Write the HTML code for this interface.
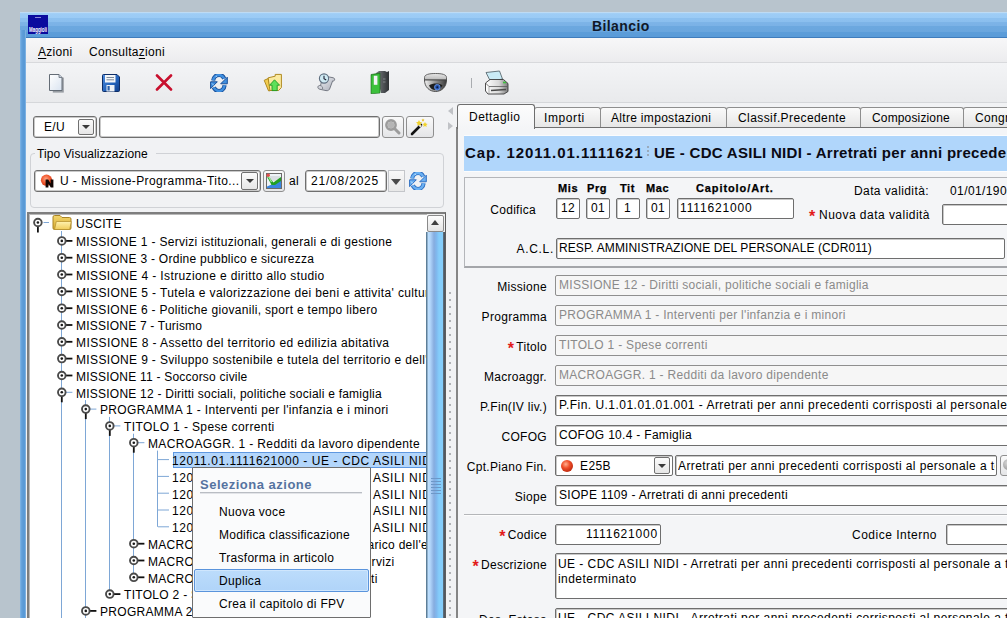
<!DOCTYPE html>
<html><head><meta charset="utf-8">
<style>
*{box-sizing:border-box;margin:0;padding:0}
html,body{width:1007px;height:618px;overflow:hidden;background:#b8c4cd;font-family:"Liberation Sans",sans-serif;font-size:12px;color:#000;letter-spacing:0.3px}
.a{position:absolute;white-space:nowrap}
#win{position:absolute;left:20px;top:12px;width:1000px;height:620px;background:#5b9ad6}
#title{position:absolute;left:20px;top:12px;width:1000px;height:26px;
 background:linear-gradient(#c4def3 0,#b8d8f4 1px,#9ecdf6 1.6px,#9bcbf5 5.5px,#8cc0ef 6.5px,#8bbfee 9.5px,#7db4e7 10.5px,#7bb2e6 13.5px,#6ca8df 14.5px,#6aa6de 19.5px,#5c9dd9 20.5px,#5a9bd8 24.5px,#3f7cbc 25.2px,#3f7cbc 26px)}
#client{position:absolute;left:26px;top:38px;width:990px;height:590px;background:#f1f2f4}
#menubar{position:absolute;left:26px;top:38px;width:990px;height:25px;background:linear-gradient(#f7f7f8,#ececee);border-bottom:1px solid #d8d9dc}
#toolbar{position:absolute;left:26px;top:63px;width:990px;height:40px;background:linear-gradient(#f3f4f6,#e9eaec);border-bottom:1px solid #d5d7da}
.inp{position:absolute;background:#fff;border:1px solid #6e6e6e;border-radius:2px;box-shadow:inset 1px 1px 0 #c8c8c8}
.dis{background:#f6f6f6;color:#888;border-color:#8f8f8f;box-shadow:none}
.lbl{position:absolute;white-space:nowrap;text-align:right}
.req{color:#e21b1b}
.tab{position:absolute;top:107px;height:20px;border:1px solid #8e8e8e;border-bottom:none;border-radius:3px 3px 0 0;background:linear-gradient(#fafafa,#e6e6e6);text-align:center;line-height:17px}
.cmb{background:#fff;border:1px solid #6f6f6f;border-radius:3px;box-shadow:inset 0 0 0 1px #c9c9c9}
.ddb{border:1px solid #707070;border-radius:2px;background:linear-gradient(#fbfbfb,#e6e6e6)}
.ddb i{position:absolute;left:50%;top:50%;margin-left:-4px;margin-top:-2px;border-left:4px solid transparent;border-right:4px solid transparent;border-top:4px solid #3a3a3a}
.btn{border:1px solid #8f8f8f;border-radius:3px;background:linear-gradient(#fafafa,#e4e5e7)}
.row{position:absolute;white-space:nowrap;height:17px;line-height:17px}
</style></head><body>
<div id="win"></div>
<div id="title"></div>
<div class="a" style="left:28px;top:15px;width:20px;height:19px;background:#0b0b9e"></div>
<div class="a" style="left:35px;top:17px;width:6px;height:1px;background:#8a8ad8"></div>
<svg class="a" style="left:28px;top:15px" width="20" height="19"><text x="1" y="17" font-family="Liberation Sans" font-weight="bold" font-size="7" fill="#fff" textLength="18" lengthAdjust="spacingAndGlyphs" style="letter-spacing:0">Maggioli</text></svg>
<div class="a" style="left:592px;top:18px;font-weight:bold;font-size:14px;letter-spacing:0.4px;color:#101828">Bilancio</div>
<div class="a" style="left:20px;top:30px;width:6px;height:600px;background:linear-gradient(90deg,#86b9e8 0,#6aa6de 1px,#5a9ad6 3px,#5a9ad6 5px,#9cc6ee 6px)"></div>
<div id="client"></div>
<div id="menubar"></div>
<div class="a" style="left:38px;top:45px"><u style="text-underline-offset:2px">A</u>zioni</div>
<div class="a" style="left:89px;top:45px">Consulta<u style="text-underline-offset:2px">z</u>ioni</div>
<div id="toolbar"></div>

<!-- toolbar icons -->
<svg class="a" style="left:48px;top:73px" width="19" height="20" viewBox="0 0 19 20">
 <defs><linearGradient id="gdoc" x1="0" y1="0" x2="1" y2="1"><stop offset="0" stop-color="#ffffff"/><stop offset="1" stop-color="#d9e3f0"/></linearGradient>
 <linearGradient id="gsave" x1="0" y1="0" x2="1" y2="1"><stop offset="0" stop-color="#4f8ee0"/><stop offset=".6" stop-color="#2160b8"/><stop offset="1" stop-color="#123f8a"/></linearGradient></defs>
 <path d="M3 3h11v15H3z" fill="#7b8088" transform="translate(1.8 1.6)" opacity=".75"/>
 <path d="M1.5 1.5h9.5l3 3v13h-12.5z" fill="url(#gdoc)" stroke="#646c76" stroke-width="1"/>
 <path d="M11 1.5v3h3" fill="#c8d2e0" stroke="#646c76" stroke-width=".8"/>
</svg>
<svg class="a" style="left:101px;top:73px" width="20" height="20" viewBox="0 0 20 20">
 <path d="M1.5 2.5q0-1 1-1h13.5l2.5 2.5v13.5q0 1-1 1H2.5q-1 0-1-1z" fill="url(#gsave)" stroke="#0d2d66" stroke-width="1"/>
 <rect x="4" y="2" width="10.5" height="7.5" fill="#f4f6f8"/>
 <path d="M5.5 4.5h7.5M5.5 6.8h7.5" stroke="#7d8a9a" stroke-width="1"/>
 <rect x="5.5" y="12" width="8" height="6.5" fill="#eef2f6"/>
 <rect x="6.5" y="13" width="2.2" height="4.5" fill="#2a5fa8"/>
</svg>
<svg class="a" style="left:155px;top:74px" width="18" height="17" viewBox="0 0 18 17">
 <path d="M2 1.5L16 15.5M16 1.5L2 15.5" stroke="#c8102e" stroke-width="2.6" stroke-linecap="round"/>
</svg>
<svg class="a" style="left:209px;top:74px" width="20" height="18" viewBox="0 0 20 18">
 <path d="M4.2 6.5C4.6 2.8 7.5 1 10.2 1C12.5 1 14.2 2.2 15.2 4.6" fill="none" stroke="#1b4f98" stroke-width="4.2"/>
 <path d="M18.3 3.2V9.8H11.7z" fill="#3f8fe0" stroke="#1b4f98" stroke-width="1" stroke-linejoin="miter"/>
 <path d="M4.2 6.5C4.6 2.8 7.5 1 10.2 1C12.5 1 14.2 2.2 15.2 4.6" fill="none" stroke="#3f8fe0" stroke-width="2.4"/>
 <path d="M15.6 11.2C15.2 15 12.5 17 9.8 17C7.5 17 5.8 15.8 4.8 13.4" fill="none" stroke="#1b4f98" stroke-width="4.2"/>
 <path d="M1.6 7.8H8.3L1.6 14.6z" fill="#3f8fe0" stroke="#1b4f98" stroke-width="1" stroke-linejoin="miter"/>
 <path d="M15.6 11.2C15.2 15 12.5 17 9.8 17C7.5 17 5.8 15.8 4.8 13.4" fill="none" stroke="#3f8fe0" stroke-width="2.4"/>
 <path d="M3 9.5L5 11.5M6.5 2.8L8 2" stroke="#a8d8ff" stroke-width="1"/>
</svg>
<svg class="a" style="left:263px;top:73px" width="21" height="20" viewBox="0 0 21 20">
 <path d="M5.2 4.8L12.2 3.2V1.4H18.4V14.5L15.6 17.5H5.5z" fill="#fbeaa0" stroke="#b08a22" stroke-width="1"/>
 <path d="M1.2 7.3L5.2 5.5L7 17.8H5.5z" fill="#f2cd50" stroke="#b08a22" stroke-width="1" stroke-linejoin="round"/>
 <path d="M11.5 6.8L16.6 12.2H14.2V17.6H9V12.2H6.6z" fill="#5ee05a" stroke="#1f9a1f" stroke-width=".9" stroke-linejoin="round"/>
</svg>
<svg class="a" style="left:317px;top:72px" width="20" height="20" viewBox="0 0 20 20">
 <defs><linearGradient id="gscr" x1="0" y1="0" x2="1" y2="1"><stop offset="0" stop-color="#f4f5f8"/><stop offset="1" stop-color="#a9adb8"/></linearGradient></defs>
 <path d="M6 4L15 5.5c2 .3 3 1 2.6 2.4-.3 1-1.2 1.3-2 1L13 16c-.5 2-2 3-4 2.6L3 17.3c-1.8-.4-2.4-1.5-2-2.7.4-1 1.5-1.3 2.5-1L6 4z" fill="url(#gscr)" stroke="#6a6e78" stroke-width=".9"/>
 <path d="M3.5 13.6c1.5.4 2.5 1.5 2 3.5" fill="none" stroke="#6a6e78" stroke-width=".8"/>
 <circle cx="7" cy="6.5" r="4.6" fill="#cfeaf3" stroke="#5f6f80" stroke-width="1.1"/>
 <path d="M7 3.8V6.7L9.2 8" stroke="#223" stroke-width="1.1" fill="none"/>
</svg>
<svg class="a" style="left:370px;top:70px" width="21" height="24" viewBox="0 0 21 24">
 <defs><linearGradient id="gbnd" x1="0" y1="0" x2="1" y2="0"><stop offset="0" stop-color="#7a7e82"/><stop offset="1" stop-color="#2e3134"/></linearGradient></defs>
 <path d="M6 3l3-2h6l2 1 2-1v19l-4 3h-4z" fill="url(#gbnd)"/>
 <path d="M1 4.5l9 -1.5v20l-9 .8z" fill="#2ea22e" stroke="#1a6a1a" stroke-width=".6"/>
 <path d="M1.6 5.5l7.8-1.2v18.4l-7.8.6z" fill="#3cc03c"/>
 <rect x="3.8" y="5.8" width="3.6" height="9" fill="#f4f2f8"/>
 <path d="M13 9h2.5M13 12h2.5" stroke="#909498" stroke-width=".8"/>
</svg>
<svg class="a" style="left:423px;top:72px" width="25" height="21" viewBox="0 0 25 21">
 <defs><linearGradient id="gdm" x1="0" y1="0" x2="1" y2="0"><stop offset="0" stop-color="#f4f4f4"/><stop offset=".45" stop-color="#9a9a9a"/><stop offset="1" stop-color="#3a3a3a"/></linearGradient>
 <linearGradient id="gdt" x1="0" y1="0" x2="0" y2="1"><stop offset="0" stop-color="#e8e8e8"/><stop offset="1" stop-color="#b8b8b8"/></linearGradient></defs>
 <path d="M1.5 5.5C1.5 2.5 6 1.5 12.5 1.5S23.5 2.5 23.5 5.5V8H1.5z" fill="url(#gdt)" stroke="#555" stroke-width=".9"/>
 <path d="M1.5 8H23.5C23.5 15 18.5 19.5 12.5 19.5S1.5 15 1.5 8z" fill="url(#gdm)" stroke="#444" stroke-width=".9"/>
 <path d="M6 13.5C8 12 10.5 11.5 13 11.5S18 12 19.5 13.5C18 16.5 15.5 18 12.5 18S7.5 16.5 6 13.5z" fill="#1e1e1e"/>
 <circle cx="14.3" cy="15.2" r="2.8" fill="#2a56b0" stroke="#6fa0f0" stroke-width=".8"/>
 <circle cx="14.3" cy="15.2" r="1" fill="#0a1a40"/>
</svg>
<div class="a" style="left:471px;top:78px;width:1px;height:10px;background:#a9acb0"></div>
<svg class="a" style="left:484px;top:70px" width="26" height="25" viewBox="0 0 26 25">
 <defs><linearGradient id="gpr" x1="0" y1="0" x2="1" y2="0"><stop offset="0" stop-color="#ffffff"/><stop offset=".6" stop-color="#d8d8d8"/><stop offset="1" stop-color="#7a7a7a"/></linearGradient></defs>
 <path d="M2 2.5L15.5 1L18.5 9L6.5 11.5z" fill="#c9eaf5" stroke="#5a6a70" stroke-width=".9"/>
 <path d="M1.5 13L6 9.5H19.5L24 13.5V21.5L20 24H4L1.5 21z" fill="url(#gpr)" stroke="#3a3a3a" stroke-width=".9"/>
 <path d="M1.5 13L5 16.5H24" fill="none" stroke="#5a5a5a" stroke-width=".8"/>
 <path d="M5 16.5V24" stroke="#888" stroke-width=".6"/>
 <path d="M7 20.5L22 19.5" stroke="#4a4a4a" stroke-width="1.6"/>
 <path d="M19 12.5h3" stroke="#3cc23c" stroke-width="1.6"/>
</svg>

<!-- left panel top controls -->
<div class="a cmb" style="left:33px;top:116px;width:64px;height:22px"></div>
<div class="a" style="left:44px;top:120px">E/U</div>
<div class="a ddb" style="left:78px;top:119px;width:16px;height:16px"><i></i></div>
<div class="a cmb" style="left:99px;top:116px;width:281px;height:22px"></div>
<div class="a btn" style="left:382px;top:116px;width:22px;height:22px"></div>
<svg class="a" style="left:384px;top:118px" width="18" height="18" viewBox="0 0 18 18">
 <circle cx="7" cy="7" r="4.6" fill="none" stroke="#9c9c9c" stroke-width="2.6"/>
 <circle cx="7" cy="7" r="3.2" fill="#b5b5b5"/>
 <path d="M10.5 10.5l4.5 4.5" stroke="#9c9c9c" stroke-width="3" stroke-linecap="round"/>
</svg>
<div class="a btn" style="left:406px;top:116px;width:28px;height:22px"></div>
<svg class="a" style="left:410px;top:118px" width="20" height="18" viewBox="0 0 20 18">
 <path d="M2 16L11 7" stroke="#111" stroke-width="2.6" stroke-linecap="round"/>
 <path d="M9.5 8.5L11 7" stroke="#fff" stroke-width="2"/>
 <path d="M9 2l1 2 2 .3-1.5 1.4.4 2L9 6.7 7.2 7.7l.4-2L6 4.3 8 4z" fill="#f1d22a"/>
 <path d="M15 4l.8 1.6 1.8.3-1.3 1.2.3 1.8-1.6-.9-1.6.9.3-1.8-1.3-1.2 1.8-.3z" fill="#f1d22a"/>
 <path d="M13 0.5l.5 1 1 .2-.8.7.2 1-.9-.5-.9.5.2-1-.8-.7 1-.2z" fill="#e8c020"/>
</svg>

<!-- group box -->
<div class="a" style="left:30px;top:153px;width:414px;height:55px;border:1px solid #d0d2d6;border-radius:4px"></div>
<div class="a" style="left:35px;top:147px;padding:0 8px 0 2px;background:#f1f2f4;height:14px;line-height:14px;letter-spacing:0.1px">Tipo Visualizzazione</div>
<div class="a cmb" style="left:34px;top:170px;width:227px;height:22px"></div>
<svg class="a" style="left:40px;top:172px" width="16" height="17" viewBox="0 0 16 17">
 <defs><radialGradient id="rn" cx=".45" cy=".4" r=".6"><stop offset="0" stop-color="#ffa888"/><stop offset=".6" stop-color="#f25a30"/><stop offset="1" stop-color="#d83a18"/></radialGradient></defs>
 <circle cx="6.5" cy="8.2" r="5.6" fill="url(#rn)"/>
 <path d="M5.6 15.6V7.6h2.6l2.4 3.8V7.6h2.8v8h-2.6L8.4 11.8v3.8z" fill="#120604"/>
</svg>
<div class="a" style="left:60px;top:174px;letter-spacing:0.42px">U - Missione-Programma-Tito...</div>
<div class="a ddb" style="left:241px;top:172px;width:17px;height:18px"><i></i></div>
<div class="a btn" style="left:263px;top:170px;width:22px;height:22px"></div>
<svg class="a" style="left:265px;top:172px" width="18" height="18" viewBox="0 0 18 18">
 <rect x="1.5" y="1.5" width="15" height="15" fill="#eef3f6" stroke="#6a6a6a" stroke-width="1"/>
 <rect x="5" y="4" width="10" height="5" fill="#d9dee2"/>
 <path d="M2 14.5L9 11.5L16 6.5V16H2z" fill="#3a86e0"/>
 <path d="M2.5 3.5C4.5 5 6.5 8.5 8.5 10.5C10.5 9 13 7 16 5V9L10 13H6.5C5 10 3.5 7 2.5 6z" fill="#23a023"/>
 <path d="M3 4C4.5 6 5.5 8 6.5 10" stroke="#a8f0a0" stroke-width="1.2" fill="none"/>
 <circle cx="3.2" cy="3.2" r="1.8" fill="#e05050"/>
</svg>
<div class="a" style="left:289px;top:174px">al</div>
<div class="a cmb" style="left:305px;top:170px;width:82px;height:22px"></div>
<div class="a" style="left:311px;top:174px;letter-spacing:0.8px">21/08/2025</div>
<div class="a" style="left:388px;top:170px;width:17px;height:22px;border:1px solid #c4c6ca;background:linear-gradient(#f8f8f8,#e8e8e8)"></div>
<div class="a" style="left:391px;top:179px;width:0;height:0;border-left:5.5px solid transparent;border-right:5.5px solid transparent;border-top:6px solid #4a4a4a"></div>
<svg class="a" style="left:408px;top:172px" width="20" height="18" viewBox="0 0 20 18">
 <path d="M4.2 6.5C4.6 2.8 7.5 1 10.2 1C12.5 1 14.2 2.2 15.2 4.6" fill="none" stroke="#2f6fc2" stroke-width="4.2"/>
 <path d="M18.3 3.2V9.8H11.7z" fill="#6ab0f2" stroke="#2f6fc2" stroke-width="1" stroke-linejoin="miter"/>
 <path d="M4.2 6.5C4.6 2.8 7.5 1 10.2 1C12.5 1 14.2 2.2 15.2 4.6" fill="none" stroke="#6ab0f2" stroke-width="2.4"/>
 <path d="M15.6 11.2C15.2 15 12.5 17 9.8 17C7.5 17 5.8 15.8 4.8 13.4" fill="none" stroke="#2f6fc2" stroke-width="4.2"/>
 <path d="M1.6 7.8H8.3L1.6 14.6z" fill="#6ab0f2" stroke="#2f6fc2" stroke-width="1" stroke-linejoin="miter"/>
 <path d="M15.6 11.2C15.2 15 12.5 17 9.8 17C7.5 17 5.8 15.8 4.8 13.4" fill="none" stroke="#6ab0f2" stroke-width="2.4"/>
 <path d="M3 9.5L5 11.5M6.5 2.8L8 2" stroke="#c8e8ff" stroke-width="1"/>
</svg>

<!-- tree frame -->
<div class="a" style="left:27px;top:212px;width:419px;height:420px;background:#fff;border:2px solid #7e7e7e;border-right:1px solid #5e5e5e;box-shadow:inset 1px 1px 0 #b8b8b8"></div>
<!-- scrollbar -->
<div class="a" style="left:427px;top:214px;width:18px;height:410px;background:#f0f0f0"></div>
<div class="a" style="left:427px;top:215px;width:17px;height:17px;border:1px solid #8a8a8a;border-radius:2px;background:linear-gradient(#fdfdfd,#e4e4e4)"></div>
<div class="a" style="left:431px;top:220px;width:0;height:0;border-left:4.5px solid transparent;border-right:4.5px solid transparent;border-bottom:5px solid #404040"></div>
<div class="a" style="left:426px;top:232px;width:19px;height:400px;background:linear-gradient(90deg,#5d7e98 0,#5d7e98 1.2px,#bfe0fd 1.8px,#b4d8fc 4px,#86acdf 8px,#7fb8ee 10.5px,#84cdfb 13px,#84cdfb 16.5px,#5a6a78 17.5px,#4a5058 19px)"></div>
<div class="a" style="left:431px;top:478px;width:10px;height:1px;background:#6d98c8;box-shadow:0 3px 0 #6d98c8,0 6px 0 #6d98c8,0 9px 0 #6d98c8,0 12px 0 #6d98c8,0 15px 0 #6d98c8"></div>
<!-- splitter -->
<div class="a" style="left:448px;top:106.5px;width:0;height:0;border-top:4.5px solid transparent;border-bottom:4.5px solid transparent;border-right:5px solid #c0c2c6"></div>
<div class="a" style="left:448px;top:121.5px;width:0;height:0;border-top:4.5px solid transparent;border-bottom:4.5px solid transparent;border-left:5px solid #c0c2c6"></div>
<div class="a" style="left:449px;top:287px;width:2px;height:340px;background:repeating-linear-gradient(transparent 0 5px,#b0b2b6 5px 7px)"></div>

<div style="position:absolute;left:0;top:0;width:1007px;height:618px;clip-path:inset(214px 581px 0 29px)">
<svg class="a" style="left:0;top:0" width="427" height="618" viewBox="0 0 427 618">
<path d="M61.5 231.0V640.0" stroke="#7ea7d6" stroke-width="1"/>
<path d="M85.5 400.1V640.0" stroke="#7ea7d6" stroke-width="1"/>
<path d="M109.5 416.9V594.1" stroke="#7ea7d6" stroke-width="1"/>
<path d="M133.5 433.7V577.3" stroke="#7ea7d6" stroke-width="1"/>
<path d="M157.5 450.6V526.8" stroke="#7ea7d6" stroke-width="1"/>
<path d="M43.5 222.5H49" stroke="#7ea7d6" stroke-width="1"/>
<path d="M158 459.6H169" stroke="#7ea7d6" stroke-width="1"/>
<path d="M158 476.4H169" stroke="#7ea7d6" stroke-width="1"/>
<path d="M158 493.2H169" stroke="#7ea7d6" stroke-width="1"/>
<path d="M158 510.0H169" stroke="#7ea7d6" stroke-width="1"/>
<path d="M158 526.8H169" stroke="#7ea7d6" stroke-width="1"/>
<path d="M37.9 226.0V232.5" stroke="#111" stroke-width="1.8"/>
<circle cx="37.9" cy="222.5" r="3.8" fill="#fff" stroke="#4a4a4a" stroke-width="1.9"/>
<circle cx="37.9" cy="222.5" r="1.3" fill="#1a1a1a"/>
<path d="M65.3 240.9H72.39999999999999" stroke="#111" stroke-width="1.8"/>
<circle cx="61.8" cy="240.9" r="3.8" fill="#fff" stroke="#4a4a4a" stroke-width="1.9"/>
<circle cx="61.8" cy="240.9" r="1.3" fill="#1a1a1a"/>
<path d="M65.3 257.7H72.39999999999999" stroke="#111" stroke-width="1.8"/>
<circle cx="61.8" cy="257.7" r="3.8" fill="#fff" stroke="#4a4a4a" stroke-width="1.9"/>
<circle cx="61.8" cy="257.7" r="1.3" fill="#1a1a1a"/>
<path d="M65.3 274.5H72.39999999999999" stroke="#111" stroke-width="1.8"/>
<circle cx="61.8" cy="274.5" r="3.8" fill="#fff" stroke="#4a4a4a" stroke-width="1.9"/>
<circle cx="61.8" cy="274.5" r="1.3" fill="#1a1a1a"/>
<path d="M65.3 291.4H72.39999999999999" stroke="#111" stroke-width="1.8"/>
<circle cx="61.8" cy="291.4" r="3.8" fill="#fff" stroke="#4a4a4a" stroke-width="1.9"/>
<circle cx="61.8" cy="291.4" r="1.3" fill="#1a1a1a"/>
<path d="M65.3 308.2H72.39999999999999" stroke="#111" stroke-width="1.8"/>
<circle cx="61.8" cy="308.2" r="3.8" fill="#fff" stroke="#4a4a4a" stroke-width="1.9"/>
<circle cx="61.8" cy="308.2" r="1.3" fill="#1a1a1a"/>
<path d="M65.3 325.0H72.39999999999999" stroke="#111" stroke-width="1.8"/>
<circle cx="61.8" cy="325.0" r="3.8" fill="#fff" stroke="#4a4a4a" stroke-width="1.9"/>
<circle cx="61.8" cy="325.0" r="1.3" fill="#1a1a1a"/>
<path d="M65.3 341.8H72.39999999999999" stroke="#111" stroke-width="1.8"/>
<circle cx="61.8" cy="341.8" r="3.8" fill="#fff" stroke="#4a4a4a" stroke-width="1.9"/>
<circle cx="61.8" cy="341.8" r="1.3" fill="#1a1a1a"/>
<path d="M65.3 358.6H72.39999999999999" stroke="#111" stroke-width="1.8"/>
<circle cx="61.8" cy="358.6" r="3.8" fill="#fff" stroke="#4a4a4a" stroke-width="1.9"/>
<circle cx="61.8" cy="358.6" r="1.3" fill="#1a1a1a"/>
<path d="M65.3 375.5H72.39999999999999" stroke="#111" stroke-width="1.8"/>
<circle cx="61.8" cy="375.5" r="3.8" fill="#fff" stroke="#4a4a4a" stroke-width="1.9"/>
<circle cx="61.8" cy="375.5" r="1.3" fill="#1a1a1a"/>
<path d="M61.8 395.8V402.3" stroke="#111" stroke-width="1.8"/>
<path d="M65.8 392.3H72.39999999999999" stroke="#7ea7d6" stroke-width="1"/>
<circle cx="61.8" cy="392.3" r="3.8" fill="#fff" stroke="#4a4a4a" stroke-width="1.9"/>
<circle cx="61.8" cy="392.3" r="1.3" fill="#1a1a1a"/>
<path d="M85.8 412.6V419.1" stroke="#111" stroke-width="1.8"/>
<path d="M89.8 409.1H96.39999999999999" stroke="#7ea7d6" stroke-width="1"/>
<circle cx="85.8" cy="409.1" r="3.8" fill="#fff" stroke="#4a4a4a" stroke-width="1.9"/>
<circle cx="85.8" cy="409.1" r="1.3" fill="#1a1a1a"/>
<path d="M109.8 429.4V435.9" stroke="#111" stroke-width="1.8"/>
<path d="M113.8 425.9H120.39999999999999" stroke="#7ea7d6" stroke-width="1"/>
<circle cx="109.8" cy="425.9" r="3.8" fill="#fff" stroke="#4a4a4a" stroke-width="1.9"/>
<circle cx="109.8" cy="425.9" r="1.3" fill="#1a1a1a"/>
<path d="M133.8 446.2V452.7" stroke="#111" stroke-width="1.8"/>
<path d="M137.8 442.7H144.4" stroke="#7ea7d6" stroke-width="1"/>
<circle cx="133.8" cy="442.7" r="3.8" fill="#fff" stroke="#4a4a4a" stroke-width="1.9"/>
<circle cx="133.8" cy="442.7" r="1.3" fill="#1a1a1a"/>
<path d="M137.3 543.7H144.4" stroke="#111" stroke-width="1.8"/>
<circle cx="133.8" cy="543.7" r="3.8" fill="#fff" stroke="#4a4a4a" stroke-width="1.9"/>
<circle cx="133.8" cy="543.7" r="1.3" fill="#1a1a1a"/>
<path d="M137.3 560.5H144.4" stroke="#111" stroke-width="1.8"/>
<circle cx="133.8" cy="560.5" r="3.8" fill="#fff" stroke="#4a4a4a" stroke-width="1.9"/>
<circle cx="133.8" cy="560.5" r="1.3" fill="#1a1a1a"/>
<path d="M137.3 577.3H144.4" stroke="#111" stroke-width="1.8"/>
<circle cx="133.8" cy="577.3" r="3.8" fill="#fff" stroke="#4a4a4a" stroke-width="1.9"/>
<circle cx="133.8" cy="577.3" r="1.3" fill="#1a1a1a"/>
<path d="M113.3 594.1H120.39999999999999" stroke="#111" stroke-width="1.8"/>
<circle cx="109.8" cy="594.1" r="3.8" fill="#fff" stroke="#4a4a4a" stroke-width="1.9"/>
<circle cx="109.8" cy="594.1" r="1.3" fill="#1a1a1a"/>
<path d="M89.3 610.9H96.39999999999999" stroke="#111" stroke-width="1.8"/>
<circle cx="85.8" cy="610.9" r="3.8" fill="#fff" stroke="#4a4a4a" stroke-width="1.9"/>
<circle cx="85.8" cy="610.9" r="1.3" fill="#1a1a1a"/>
<defs><linearGradient id="fgb" x1="0" y1="0" x2="0" y2="1"><stop offset="0" stop-color="#f3d66e"/><stop offset="1" stop-color="#d6a92c"/></linearGradient><linearGradient id="fgf" x1="0" y1="0" x2="0" y2="1"><stop offset="0" stop-color="#fff2b0"/><stop offset="1" stop-color="#f0cc5a"/></linearGradient></defs>
<path d="M53 217q0-1.5 1.5-1.5h5.5l2 2h7.5q1.5 0 1.5 1.5v9q0 1.5-1.5 1.5H54.5q-1.5 0-1.5-1.5z" fill="url(#fgb)" stroke="#a98424" stroke-width="1"/>
<path d="M54.5 229.5l1.8-8h15l-1.6 8z" fill="url(#fgf)" stroke="#b89332" stroke-width=".8"/>
</svg>
<div class="a" style="left:173px;top:451.5px;width:260px;height:16px;background:#b3d6fb;border:1px solid #5f98e0"></div>

<div class="row" style="left:76px;top:215.84px;letter-spacing:0.300px">USCITE</div>
<div class="row" style="left:76px;top:234.24px;letter-spacing:0.310px">MISSIONE 1 - Servizi istituzionali, generali e di gestione</div>
<div class="row" style="left:76px;top:251.06px;letter-spacing:0.268px">MISSIONE 3 - Ordine pubblico e sicurezza</div>
<div class="row" style="left:76px;top:267.88px;letter-spacing:0.383px">MISSIONE 4 - Istruzione e diritto allo studio</div>
<div class="row" style="left:76px;top:284.70px;letter-spacing:0.370px">MISSIONE 5 - Tutela e valorizzazione dei beni e attivita&#39; culturali</div>
<div class="row" style="left:76px;top:301.52px;letter-spacing:0.322px">MISSIONE 6 - Politiche giovanili, sport e tempo libero</div>
<div class="row" style="left:76px;top:318.34px;letter-spacing:0.209px">MISSIONE 7 - Turismo</div>
<div class="row" style="left:76px;top:335.16px;letter-spacing:0.408px">MISSIONE 8 - Assetto del territorio ed edilizia abitativa</div>
<div class="row" style="left:76px;top:351.98px;letter-spacing:0.350px">MISSIONE 9 - Sviluppo sostenibile e tutela del territorio e dell&#39;ambiente</div>
<div class="row" style="left:76px;top:368.80px;letter-spacing:0.219px">MISSIONE 11 - Soccorso civile</div>
<div class="row" style="left:76px;top:385.62px;letter-spacing:0.233px">MISSIONE 12 - Diritti sociali, politiche sociali e famiglia</div>
<div class="row" style="left:100px;top:402.44px;letter-spacing:0.338px">PROGRAMMA 1 - Interventi per l&#39;infanzia e i minori</div>
<div class="row" style="left:124px;top:419.26px;letter-spacing:0.380px">TITOLO 1 - Spese correnti</div>
<div class="row" style="left:148px;top:436.08px;letter-spacing:0.355px">MACROAGGR. 1 - Redditi da lavoro dipendente</div>
<div class="row" style="left:172px;top:452.90px;letter-spacing:0.570px">12011.01.1111621000 - UE - CDC ASILI NIDI - Arretrati</div>
<div class="row" style="left:172px;top:469.72px;letter-spacing:0.570px">12011.01.1111621001 - UE - CDC ASILI NIDI - Arretrati</div>
<div class="row" style="left:172px;top:486.54px;letter-spacing:0.570px">12011.01.1111621002 - UE - CDC ASILI NIDI - Arretrati</div>
<div class="row" style="left:172px;top:503.36px;letter-spacing:0.570px">12011.01.1111621003 - UE - CDC ASILI NIDI - Arretrati</div>
<div class="row" style="left:172px;top:520.18px;letter-spacing:0.570px">12011.01.1111621004 - UE - CDC ASILI NIDI - Arretrati</div>
<div class="row" style="left:148px;top:537.00px;letter-spacing:0.300px">MACROAGGR. 2 - Imposte e tasse a carico dell&#39;ente</div>
<div class="row" style="left:148px;top:553.82px;letter-spacing:0.300px">MACROAGGR. 3 - Acquisto di beni e servizi</div>
<div class="row" style="left:148px;top:570.64px;letter-spacing:0.300px">MACROAGGR. 4 - Trasferimenti correnti</div>
<div class="row" style="left:124px;top:587.46px;letter-spacing:0.300px">TITOLO 2 - Spese in conto capitale</div>
<div class="row" style="left:100px;top:604.28px;letter-spacing:0.300px">PROGRAMMA 2 - Interventi per la disabilita&#39;</div>
</div>
<!-- fragments right of menu -->
<div class="a" style="left:371px;top:534px;width:55px;height:52px;background:#fff;overflow:hidden">
 <div class="row" style="left:-3.5px;top:2.9px;letter-spacing:0.3px">arico dell'ente</div>
 <div class="row" style="left:0.6px;top:19.8px;letter-spacing:0.3px">rvizi</div>
 <div class="row" style="left:0.1px;top:36.6px;letter-spacing:0.3px">ti</div>
</div>
<!-- context menu -->
<div class="a" style="left:192px;top:467px;width:179px;height:151px;background:#fafbfc;border:1px solid #6e6e6e;border-radius:1px"></div>
<div class="a" style="left:200px;top:477px;font-size:13px;font-weight:bold;letter-spacing:0.5px;color:#5573a0">Seleziona azione</div>
<div class="a" style="left:200px;top:492px;width:162px;height:1px;background:#b9bdc3;box-shadow:0 1px 0 #e2e4e8"></div>
<div class="a" style="left:219px;top:505px;letter-spacing:0.3px">Nuova voce</div>
<div class="a" style="left:219px;top:528px;letter-spacing:0.23px">Modifica classificazione</div>
<div class="a" style="left:219px;top:551px;letter-spacing:0.3px">Trasforma in articolo</div>
<div class="a" style="left:194px;top:569px;width:175px;height:23px;border:1px solid #5a94dc;border-radius:2px;background:linear-gradient(#bcdcfb,#b0d4f9);box-shadow:inset 0 0 0 1px #cfe6fd"></div>
<div class="a" style="left:219px;top:574px;letter-spacing:0.3px">Duplica</div>
<div class="a" style="left:219px;top:597px;letter-spacing:0.3px">Crea il capitolo di FPV</div>

<!-- tab control -->
<div class="a" style="left:456px;top:127px;width:600px;height:600px;border-left:2px solid #858585;border-top:1px solid #707070;background:#f4f5f7"></div>
<div class="tab" style="left:534px;width:67px"></div>
<div class="tab" style="left:600px;width:127px"></div>
<div class="tab" style="left:726px;width:135px"></div>
<div class="tab" style="left:860px;width:104px"></div>
<div class="tab" style="left:963px;width:80px"></div>
<div class="a" style="left:544px;top:111px;letter-spacing:0.6px">Importi</div>
<div class="a" style="left:611px;top:111px;letter-spacing:0.31px">Altre impostazioni</div>
<div class="a" style="left:738px;top:111px;letter-spacing:0.41px">Classif.Precedente</div>
<div class="a" style="left:872px;top:111px;letter-spacing:0.15px">Composizione</div>
<div class="a" style="left:975px;top:111px;letter-spacing:0.3px">Congruita'</div>
<div class="a" style="left:457px;top:104px;width:78px;height:25px;border:1px solid #6e6e6e;border-bottom:none;border-radius:3px 3px 0 0;background:linear-gradient(#fcfcfc,#f4f5f7)"></div>
<div class="a" style="left:469px;top:110px;letter-spacing:0.46px">Dettaglio</div>

<!-- header -->
<div class="a" style="left:464px;top:136px;width:560px;height:35px;background:#b0d6fb;box-shadow:0 -1px 0 #fbfcfd,0 1px 0 #fbfcfd"></div>
<div class="a" style="left:465px;top:144px;font-size:15px;font-weight:bold;letter-spacing:0.95px;color:#0a0a14">Cap. 12011.01.1111621</div>
<div class="a" style="left:647px;top:146px;width:2px;height:12px;background:repeating-linear-gradient(#9ab 0 2px,transparent 2px 4px)"></div>
<div class="a" style="left:654px;top:144px;font-size:15px;font-weight:bold;letter-spacing:0.28px;color:#0a0a14">UE - CDC ASILI NIDI - Arretrati per anni precedenti</div>

<!-- codifica group -->
<div class="a" style="left:464px;top:177px;width:560px;height:91px;border:1px solid #b4b6ba;border-right:none;border-bottom:2px solid #a4a6aa"></div>
<div class="a" style="left:558px;top:182px;font-size:11px;font-weight:bold;-webkit-text-stroke:0.25px #000;letter-spacing:0.6px">Mis</div>
<div class="a" style="left:587px;top:182px;font-size:11px;font-weight:bold;-webkit-text-stroke:0.25px #000;letter-spacing:0.6px">Prg</div>
<div class="a" style="left:620px;top:182px;font-size:11px;font-weight:bold;-webkit-text-stroke:0.25px #000;letter-spacing:0.6px">Tit</div>
<div class="a" style="left:646px;top:182px;font-size:11px;font-weight:bold;-webkit-text-stroke:0.25px #000;letter-spacing:0.6px">Mac</div>
<div class="a" style="left:696px;top:182px;font-size:11px;font-weight:bold;-webkit-text-stroke:0.25px #000;letter-spacing:0.9px">Capitolo/Art.</div>
<div class="lbl" style="left:440px;top:203px;width:96px">Codifica</div>
<div class="inp" style="left:556px;top:198px;width:24px;height:21px"></div>
<div class="a" style="left:561px;top:201px">12</div>
<div class="inp" style="left:586px;top:198px;width:24px;height:21px"></div>
<div class="a" style="left:591px;top:201px">01</div>
<div class="inp" style="left:616px;top:198px;width:24px;height:21px"></div>
<div class="a" style="left:624px;top:201px">1</div>
<div class="inp" style="left:646px;top:198px;width:24px;height:21px"></div>
<div class="a" style="left:651px;top:201px">01</div>
<div class="inp" style="left:677px;top:198px;width:117px;height:21px"></div>
<div class="a" style="left:680px;top:201px;letter-spacing:0.85px">1111621000</div>
<div class="a" style="left:854px;top:184px;letter-spacing:0.4px">Data validità:</div>
<div class="a" style="left:950px;top:184px;letter-spacing:0.4px">01/01/1900</div>
<div class="a req" style="left:809px;top:208px;font-size:16px;font-weight:bold">*</div>
<div class="a" style="left:819px;top:208px;letter-spacing:0.47px">Nuova data validità</div>
<div class="inp" style="left:942px;top:204px;width:80px;height:21px"></div>
<div class="lbl" style="left:440px;top:242px;width:114px;letter-spacing:0.7px">A.C.L.</div>
<div class="inp" style="left:556px;top:238px;width:449px;height:21px"></div>
<div class="a" style="left:559px;top:241px;letter-spacing:0.1px">RESP. AMMINISTRAZIONE DEL PERSONALE (CDR011)</div>

<!-- fields -->
<div class="lbl" style="left:440px;top:280px;width:107px">Missione</div>
<div class="inp dis" style="left:555px;top:275px;width:470px;height:21px"></div>
<div class="a" style="left:559px;top:278px;color:#8a8a8a">MISSIONE 12 - Diritti sociali, politiche sociali e famiglia</div>
<div class="lbl" style="left:440px;top:310px;width:107px">Programma</div>
<div class="inp dis" style="left:555px;top:305px;width:470px;height:21px"></div>
<div class="a" style="left:559px;top:308px;color:#8a8a8a">PROGRAMMA 1 - Interventi per l'infanzia e i minori</div>
<div class="lbl" style="left:440px;top:340px;width:107px"><span class="req" style="font-size:16px;font-weight:bold;line-height:0;position:relative;top:3px;margin-right:2px">*</span>Titolo</div>
<div class="inp dis" style="left:555px;top:335px;width:470px;height:21px"></div>
<div class="a" style="left:559px;top:338px;color:#8a8a8a">TITOLO 1 - Spese correnti</div>
<div class="lbl" style="left:440px;top:370px;width:107px">Macroaggr.</div>
<div class="inp dis" style="left:555px;top:365px;width:470px;height:21px"></div>
<div class="a" style="left:559px;top:368px;color:#8a8a8a">MACROAGGR. 1 - Redditi da lavoro dipendente</div>
<div class="lbl" style="left:440px;top:400px;width:107px">P.Fin(IV liv.)</div>
<div class="inp" style="left:555px;top:395px;width:470px;height:21px"></div>
<div class="a" style="left:559px;top:398px;letter-spacing:0.47px">P.Fin. U.1.01.01.01.001 - Arretrati per anni precedenti corrisposti al personale a tempo</div>
<div class="lbl" style="left:440px;top:430px;width:107px">COFOG</div>
<div class="inp" style="left:555px;top:425px;width:470px;height:21px"></div>
<div class="a" style="left:559px;top:428px">COFOG 10.4 - Famiglia</div>
<div class="lbl" style="left:440px;top:460px;width:107px">Cpt.Piano Fin.</div>
<div class="inp" style="left:555px;top:455px;width:118px;height:21px"></div>
<svg class="a" style="left:560px;top:459px" width="14" height="14" viewBox="0 0 14 14">
 <defs><radialGradient id="rball" cx=".4" cy=".35" r=".65"><stop offset="0" stop-color="#ffb090"/><stop offset=".5" stop-color="#f0502a"/><stop offset="1" stop-color="#c02a10"/></radialGradient></defs><circle cx="7" cy="7" r="6" fill="url(#rball)"/>
</svg>
<div class="a" style="left:580px;top:459px;letter-spacing:0.4px">E25B</div>
<div class="a ddb" style="left:654px;top:457px;width:16px;height:17px"><i></i></div>
<div class="inp" style="left:675px;top:455px;width:322px;height:21px;overflow:hidden"></div>
<div class="a" style="left:678px;top:459px;width:317px;overflow:hidden;letter-spacing:0.42px">Arretrati per anni precedenti corrisposti al personale a tempo</div>
<div class="a btn" style="left:1000px;top:455px;width:20px;height:21px;border-radius:3px"></div>
<div class="a" style="left:1003px;top:459px;width:11px;height:11px;border-radius:50%;background:radial-gradient(circle at 40% 35%,#d8d8d8,#8a8a8a)"></div>
<div class="lbl" style="left:440px;top:490px;width:107px">Siope</div>
<div class="inp" style="left:555px;top:485px;width:470px;height:21px"></div>
<div class="a" style="left:559px;top:488px">SIOPE 1109 - Arretrati di anni precedenti</div>

<div class="a" style="left:464px;top:514px;width:560px;height:2px;background:#b4b6b9;border-bottom:1px solid #fdfdfd"></div>

<div class="lbl" style="left:440px;top:528px;width:107px"><span class="req" style="font-size:16px;font-weight:bold;line-height:0;position:relative;top:3px;margin-right:2px">*</span>Codice</div>
<div class="inp" style="left:555px;top:524px;width:106px;height:21px"></div>
<div class="a" style="left:558px;top:527px;width:100px;text-align:right;letter-spacing:0.8px">1111621000</div>
<div class="a" style="left:852px;top:528px;letter-spacing:0.5px">Codice Interno</div>
<div class="inp" style="left:946px;top:524px;width:80px;height:21px"></div>
<div class="lbl" style="left:440px;top:558px;width:107px"><span class="req" style="font-size:16px;font-weight:bold;line-height:0;position:relative;top:3px;margin-right:2px">*</span>Descrizione</div>
<div class="inp" style="left:555px;top:553px;width:470px;height:46px"></div>
<div class="a" style="left:558px;top:557px;line-height:15px;letter-spacing:0.45px">UE - CDC ASILI NIDI - Arretrati per anni precedenti corrisposti al personale a tempo<br>indeterminato</div>
<div class="lbl" style="left:440px;top:613px;width:107px">Des. Estesa</div>
<div class="inp" style="left:555px;top:608px;width:470px;height:40px"></div>
<div class="a" style="left:558px;top:611px;letter-spacing:0.45px">UE - CDC ASILI NIDI - Arretrati per anni precedenti corrisposti al personale a tempo</div>

</body></html>
